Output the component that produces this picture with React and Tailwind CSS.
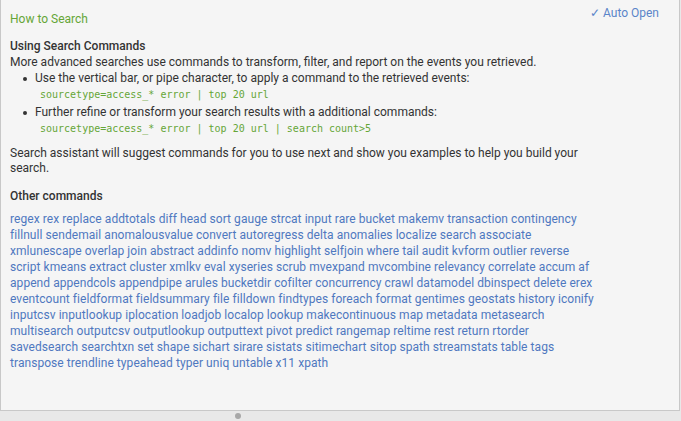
import React from "react";

const commands = [
  "regex rex replace addtotals diff head sort gauge strcat input rare bucket makemv transaction contingency",
  "fillnull sendemail anomalousvalue convert autoregress delta anomalies localize search associate",
  "xmlunescape overlap join abstract addinfo nomv highlight selfjoin where tail audit kvform outlier reverse",
  "script kmeans extract cluster xmlkv eval xyseries scrub mvexpand mvcombine relevancy correlate accum af",
  "append appendcols appendpipe arules bucketdir cofilter concurrency crawl datamodel dbinspect delete erex",
  "eventcount fieldformat fieldsummary file filldown findtypes foreach format gentimes geostats history iconify",
  "inputcsv inputlookup iplocation loadjob localop lookup makecontinuous map metadata metasearch",
  "multisearch outputcsv outputlookup outputtext pivot predict rangemap reltime rest return rtorder",
  "savedsearch searchtxn set shape sichart sirare sistats sitimechart sitop spath streamstats table tags",
  "transpose trendline typeahead typer uniq untable x11 xpath",
];

const mono = { fontFamily: "'DejaVu Sans Mono', 'Liberation Mono', monospace" };

export default function App() {
  return (
    <div
      className="w-[681px] h-[421px] bg-[#e8e8e8] flex flex-col overflow-hidden"
      style={{ fontFamily: "Roboto, 'Liberation Sans', sans-serif" }}
    >
      <div className="w-[680px] h-[411px] bg-[#f5f5f5] border-l border-r border-b border-[#c8c8c8] pl-[9px] pr-[20px] text-[12px] text-[#333]">
        <div className="flex justify-between h-[30px]">
          <div className="text-[#65a637] text-[12px] mt-[12px] leading-[15px]">How to Search</div>
          <div className="text-[#5a85c9] text-[12px] mt-[6px] leading-[15px]">✓ Auto Open</div>
        </div>
        <div className="mt-[8px] font-medium leading-[16px]">Using Search Commands</div>
        <div className="leading-[16px]">More advanced searches use commands to transform, filter, and report on the events you retrieved.</div>
        <ul className="leading-[16px]">
          <li className="flex">
            <span className="w-[25px] flex justify-end pr-[8px] pt-[7px]">
              <span className="w-[4px] h-[4px] rounded-full bg-[#333]" />
            </span>
            <div>
              <div>Use the vertical bar, or pipe character, to apply a command to the retrieved events:</div>
              <div className="text-[#65a637] text-[10px] pl-[5px] leading-[16px] mt-[1px]" style={mono}>sourcetype=access_* error | top 20 url</div>
            </div>
          </li>
          <li className="flex mt-[1px]">
            <span className="w-[25px] flex justify-end pr-[8px] pt-[7px]">
              <span className="w-[4px] h-[4px] rounded-full bg-[#333]" />
            </span>
            <div>
              <div>Further refine or transform your search results with a additional commands:</div>
              <div className="text-[#65a637] text-[10px] pl-[5px] leading-[16px] mt-[1px]" style={mono}>sourcetype=access_* error | top 20 url | search count&gt;5</div>
            </div>
          </li>
        </ul>
        <div className="mt-[9px] leading-[15px] w-[600px]">Search assistant will suggest commands for you to use next and show you examples to help you build your search.</div>
        <div className="mt-[12px] font-medium leading-[16px]">Other commands</div>
        <div className="mt-[7px] text-[#4f78c0] leading-[16px] tracking-[0.06px]">
          {commands.map((l, i) => (
            <div key={i}>{l}</div>
          ))}
        </div>
      </div>
      <div className="flex-1 flex justify-center items-center">
        <div className="w-[6px] h-[6px] rounded-full bg-[#a8a8a8] ml-[-205px]" />
      </div>
    </div>
  );
}
